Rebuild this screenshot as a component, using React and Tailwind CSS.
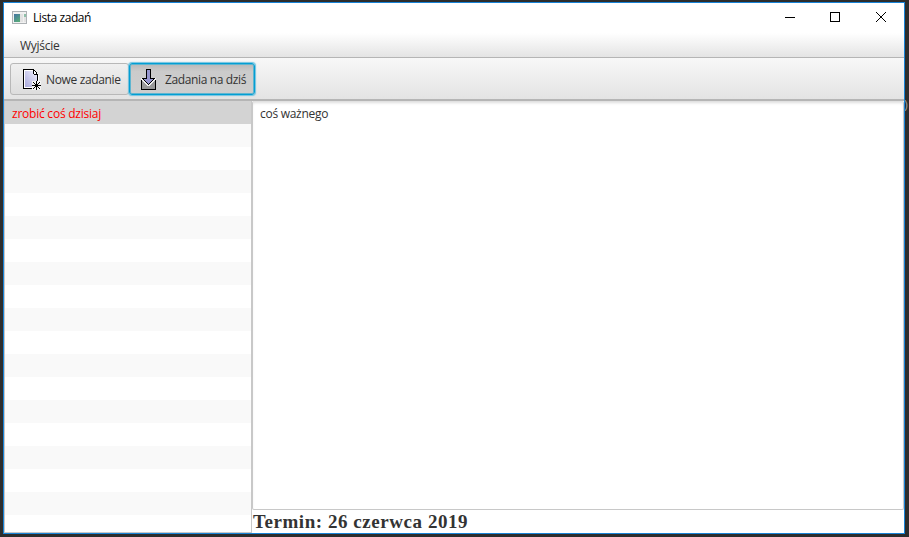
import React from "react";

const rows = Array.from({ length: 17 }, (_, i) => i);

function AppIcon() {
  return (
    <svg width="16" height="14" viewBox="0 0 16 14" shapeRendering="crispEdges">
      <defs>
        <linearGradient id="pane" x1="0" y1="0" x2="0.6" y2="1">
          <stop offset="0" stopColor="#4474a4" />
          <stop offset="1" stopColor="#58a87c" />
        </linearGradient>
      </defs>
      <rect x="0.5" y="0.5" width="14" height="12" fill="#f1f1f1" stroke="#aeb2b5" />
      <rect x="2" y="3" width="6" height="8" fill="url(#pane)" />
      <rect x="8" y="3" width="3" height="8" fill="#e2e2e2" />
      <rect x="12" y="3" width="2" height="8" fill="#e2e2e2" />
      <rect x="12" y="3" width="2" height="3" fill="#8fbfa9" />
    </svg>
  );
}

function NewIcon() {
  return (
    <svg width="20" height="22" viewBox="0 0 20 22" shapeRendering="crispEdges">
      <defs>
        <linearGradient id="sheet" x1="0" y1="1" x2="1" y2="0">
          <stop offset="0" stopColor="#a9a9dc" />
          <stop offset="1" stopColor="#f2f2ff" />
        </linearGradient>
      </defs>
      <path d="M1 1h11v1h1v1h1v1h1v2h1v7h-1v6H1z" fill="#fff" />
      <path d="M2 2h9v4h3v7h-3v5H2z" fill="url(#sheet)" />
      <path d="M0 0h11v1H1v18h9v1H0z" fill="#000" />
      <path d="M11 1h1v1h-1zM12 2h1v1h-1zM13 3h1v2h-1zM14 5h1v7h-1zM10 1h1v4h-1zM11 5h3v1h-3z" fill="#000" />
      <path d="M9 12h9v9h-9z" fill="#f4f4f4" />
      <path d="M13 12h1v9h-1zM9 16h9v1h-9zM10 13h1v1h-1zM11 14h1v1h-1zM12 15h1v1h-1zM14 17h1v1h-1zM15 18h1v1h-1zM16 19h1v1h-1zM16 13h1v1h-1zM15 14h1v1h-1zM14 15h1v1h-1zM12 17h1v1h-1zM11 18h1v1h-1zM10 19h1v1h-1z" fill="#000" />
    </svg>
  );
}

function TodayIcon() {
  return (
    <svg width="18" height="22" viewBox="0 0 18 22" shapeRendering="crispEdges">
      <path d="M1 11h15v10H1z" fill="#000" />
      <path d="M2 12h13v8H2z" fill="#999" />
      <path d="M1 9h15v2h-1v1h-1v1h-1v1h-1v1h-1v1h-1v1H7v-1H6v-1H5v-1H4v-1H3v-1H2v-1H1z" fill="#efefef" />
      <path d="M6 0h5v9h4v1h-1v1h-1v1h-1v1h-1v1h-1v1H9v1H8v-1H7v-1H6v-1H5v-1H4v-1H3v-1H2V9h4z" fill="#000" />
      <path d="M7 1h3v9h3v1h-1v1h-1v1h-1v1H9v1H8v-1H7v-1H6v-1H5v-1H4v-1h3z" fill="#9696cf" />
    </svg>
  );
}

export default function App() {
  return (
    <div className="relative h-[537px] w-[909px] overflow-hidden bg-[#2d2d2d] pt-[2px] pl-[3px] font-['Open_Sans','Noto_Sans',sans-serif] text-[12px] text-[#333]">
      <span className="absolute top-[97px] left-[904px] text-[13px] leading-[14px] text-[#999]">)</span>
      <div className="relative flex h-[532px] w-[902px] flex-col border border-[#1883d7] bg-white">
        <div className="flex h-[30px] shrink-0 items-center">
          <div className="ml-2 w-[21px]"><AppIcon /></div>
          <span className="grow tracking-[-0.43px] text-black">Lista zadań</span>
          <svg width="122" height="30" viewBox="0 0 122 30" shapeRendering="crispEdges" stroke="#000" fill="none">
            <path d="M3 14.5h10M48.5 9.5h9v9h-9z" />
            <path d="M94 9l10 10M104 9l-10 10" shapeRendering="auto" />
          </svg>
        </div>
        <div className="flex h-[25px] shrink-0 items-center border-b border-[#b5b5b5] bg-linear-to-b from-white to-[#e4e4e4] pt-[2px] pl-4">
          <span className="tracking-[-0.25px]">Wyjście</span>
        </div>
        <div className="flex h-[43px] shrink-0 items-start border-b-2 border-[#b5b5b5] bg-linear-to-b from-[#f8f8f8] to-[#e3e3e3] pt-[5px] pl-[6px]">
          <div className="flex h-[32px] w-[119px] items-center rounded-[3px] border border-[#b8b8b8] bg-linear-to-b from-[#f0f0f0] to-[#dddddd] pt-px pl-[12px]">
            <div className="w-[23px]"><NewIcon /></div>
            <span className="tracking-[-0.35px] whitespace-nowrap">Nowe zadanie</span>
          </div>
          <div className="flex h-[32px] w-[126px] items-center rounded-[3px] border border-[#039ed3] bg-linear-to-b from-[#b8b8b8] via-[#cbcbcb] via-25% to-[#cecece] pt-px pl-[10px] shadow-[0_0_1px_1px_#6fc3e0,inset_0_0_0_1px_#5fb5d0]">
            <div className="w-[25px]"><TodayIcon /></div>
            <span className="tracking-[-0.37px] whitespace-nowrap">Zadania na dziś</span>
          </div>
        </div>
        <div className="flex min-h-0 grow">
          <div className="flex w-[248px] flex-col overflow-hidden border-r border-b border-l border-[#c8c8c8]">
            <div className="flex h-[23px] shrink-0 items-center bg-[#d3d3d3] pt-[2px] pl-[7px] text-[#ff0000]">
              <span className="tracking-[-0.23px]">zrobić coś dzisiaj</span>
            </div>
            {rows.map((i) => (
              <div key={i} className="h-[23px] shrink-0 odd:bg-white even:bg-[#f9f9f9]" />
            ))}
          </div>
          <div className="flex grow flex-col">
            <div className="h-[409px] rounded-[2px] border-r border-b border-l border-[#c8c8c8] pt-[4px] pl-[7px] leading-[18px] tracking-[-0.28px] shadow-[inset_0_3px_3px_-1px_#dddddd]">
              coś ważnego
            </div>
            <div className="pl-px font-['Liberation_Serif','Times_New_Roman',serif] text-[19px] leading-[23px] font-bold tracking-[0.55px] whitespace-nowrap">
              Termin: 26 czerwca 2019
            </div>
          </div>
        </div>
      </div>
    </div>
  );
}
